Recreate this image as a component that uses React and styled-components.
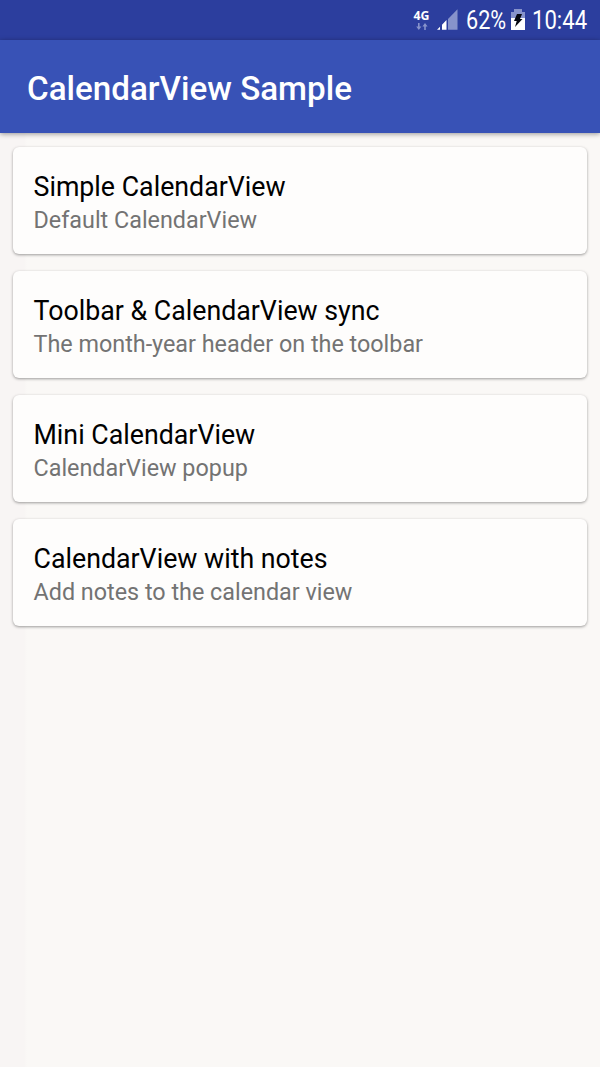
import React from 'react';
import styled, { createGlobalStyle } from 'styled-components';

const GlobalStyle = createGlobalStyle`
  * { box-sizing: border-box; }
  body { margin: 0; background: #faf8f6; font-family: Roboto, "Liberation Sans", sans-serif; }
`;

const Screen = styled.div`
  width: 600px;
  height: 1067px;
  display: flex;
  flex-direction: column;
  overflow: hidden;
  background: linear-gradient(90deg, #f8f5f4 0, #f8f5f4 24px, #faf8f6 27px);
`;

const StatusBar = styled.div`
  height: 40px;
  flex: none;
  display: flex;
  align-items: flex-start;
  justify-content: flex-end;
  padding-right: 12px;
  background: #2c3e9e;
  color: #fff;
`;

const StatusText = styled.span`
  width: ${({ $width }) => $width}px;
  font-size: 25px;
  line-height: 42px;
  white-space: nowrap;
  transform: scaleX(${({ $scale }) => $scale});
  transform-origin: left;
`;

const Network = styled.div`
  display: flex;
  flex-direction: column;
  align-items: center;
  width: 17px;
  margin-right: 7px;
  padding-top: 8px;
  font-family: "Noto Sans", Roboto, sans-serif;
  font-size: 12.3px;
  line-height: 15px;
  font-weight: 700;
`;

const SignalIcon = styled.svg`
  flex: none;
  margin: 9px 8px 0 0;
`;

const BatteryIcon = styled.svg`
  flex: none;
  margin: 9px 7px 0 4px;
`;

const Toolbar = styled.header`
  height: 93px;
  flex: none;
  display: flex;
  align-items: center;
  padding: 4px 27px 0;
  background: #3852b6;
  color: #fff;
  box-shadow: 0 1px 5px rgba(0, 0, 0, 0.4);
`;

const Title = styled.h1`
  margin: 0;
  font-size: 33.2px;
  line-height: 41px;
  font-weight: 500;
  white-space: nowrap;
`;

const CardList = styled.main`
  display: flex;
  flex-direction: column;
  gap: 17px;
  padding: 14px 13px;
`;

const Card = styled.section`
  height: 107.1px;
  padding: 22.6px 20.5px;
  border-radius: 6px;
  background: #fefdfc;
  box-shadow: 0 1px 3px rgba(0, 0, 0, 0.38);
`;

const CardTitle = styled.h2`
  margin: 0;
  font-size: 26.75px;
  line-height: 34px;
  font-weight: 400;
  color: #000;
  white-space: nowrap;
`;

const CardDescription = styled.p`
  margin: 0;
  font-size: 23.35px;
  line-height: 33px;
  color: #737373;
  white-space: nowrap;
`;

const items = [
  ['Simple CalendarView', 'Default CalendarView'],
  ['Toolbar & CalendarView sync', 'The month-year header on the toolbar'],
  ['Mini CalendarView', 'CalendarView popup'],
  ['CalendarView with notes', 'Add notes to the calendar view'],
];

export default function App() {
  return (
    <Screen>
      <GlobalStyle />
      <StatusBar>
        <Network>
          <span>4G</span>
          <svg width="12" height="7" viewBox="0 0 12 7" fill="#8793cb">
            <path d="M2 0h1.6v3.6H5.4L2.8 7 .2 3.6H2zM8.2 7h1.6V3.4h1.8L9 0 6.4 3.4h1.8z" />
          </svg>
        </Network>
        <SignalIcon width="21" height="21" viewBox="0 0 21 21">
          <path d="M11 10L20.5 .3V20.7H11z" fill="#8793cb" />
          <path d="M0 20.7l3-3v3zM5 15.7l4.5-4.7v9.7H5z" fill="#fff" />
        </SignalIcon>
        <StatusText $width={41} $scale={0.865}>62%</StatusText>
        <BatteryIcon width="14" height="21" viewBox="0 0 14 21">
          <path d="M3 0h8v3h3v6H0V3h3z" fill="#8793cb" />
          <path d="M0 9h14v12H0z" fill="#fff" />
          <path d="M6 5h5L9 10h2.5L4 18l1.7-6H3z" fill="#05070f" />
        </BatteryIcon>
        <StatusText $width={56} $scale={0.885}>10:44</StatusText>
      </StatusBar>
      <Toolbar>
        <Title>CalendarView Sample</Title>
      </Toolbar>
      <CardList>
        {items.map(([title, description]) => (
          <Card key={title}>
            <CardTitle>{title}</CardTitle>
            <CardDescription>{description}</CardDescription>
          </Card>
        ))}
      </CardList>
    </Screen>
  );
}
